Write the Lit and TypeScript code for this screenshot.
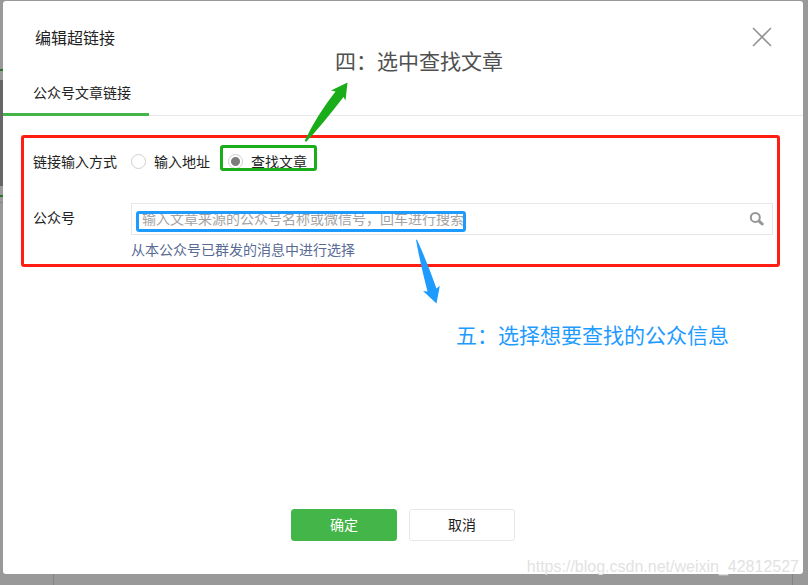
import { LitElement, html, css, svg } from "lit";
import { customElement, state } from "lit/decorators.js";

const closeIcon = svg`<svg width="20" height="20" viewBox="0 0 20 20" aria-hidden="true">
  <path d="M1 1 19 19M19 1 1 19" fill="none" stroke="#949494" stroke-width="1.6"/>
</svg>`;

const searchIcon = svg`<svg width="16" height="16" viewBox="0 0 16 16" aria-hidden="true">
  <circle cx="7.300" cy="6.400" r="4.500" fill="none" stroke="#969696" stroke-width="2"/>
  <path d="M11.300 10.300 14.200 13" stroke="#969696" stroke-width="3" stroke-linecap="round"/>
</svg>`;

@customElement("app-root")
export class AppRoot extends LitElement {
  @state() private mode = "search";

  static styles = css`
    :host {
      display: flex;
      flex-direction: column;
      box-sizing: border-box;
      position: relative;
      min-height: 100vh;
      padding: 1px 5px 11px 3px;
      overflow: hidden;
      color: #222;
      font: 14px/20px "Noto Sans CJK SC", sans-serif;
      background:
        linear-gradient(#858585, #858585) 53px 100% / 1px 11px no-repeat,
        linear-gradient(#858585, #858585) calc(100% - 15px) 100% / 1px 11px no-repeat,
        linear-gradient(#999 69px, #287328 69px 71px, #999 71px 80px, #666 80px 186px,
          #999 186px 195px, #287328 195px 197px, #999 197px 202px, #858585 202px 203px, #999 203px) 0 0 / 3px 100% no-repeat,
        #999;
    }
    .dialog {
      flex: 1;
      display: flex;
      flex-direction: column;
      background: #fff;
      border-radius: 3px;
    }
    .head {
      display: flex;
      align-items: center;
      justify-content: space-between;
      height: 72px;
      padding: 0 31px 0 32px;
    }
    h1 { margin: 0; font-size: 16px; font-weight: 400; line-height: 24px; }
    button { font: inherit; cursor: pointer; }
    .icon-button {
      display: flex;
      padding: 0;
      border: 0;
      background: none;
    }
    .tabs {
      display: flex;
      height: 42px;
      border-bottom: 1px solid #e7e7eb;
    }
    .tab {
      box-sizing: border-box;
      height: 43px;
      padding: 9px 18px 0 30px;
      border-bottom: 3px solid #44b549;
      color: inherit;
      text-decoration: none;
    }
    .form {
      display: flex;
      flex-direction: column;
      margin: 19px 23px 0 18px;
      padding: 13px 4px 5px 9px;
      border: 3px solid #ff1d14;
      border-radius: 3px;
    }
    .row { display: flex; }
    .row + .row { margin-top: 32px; }
    .label { flex: none; width: 98px; }
    .choices { display: flex; margin: 0; padding: 0; border: 0; }
    .choice { display: flex; align-items: center; gap: 8px; position: relative; }
    .choice + .choice { margin-left: 18px; }
    .choice input {
      appearance: none;
      box-sizing: border-box;
      width: 15px;
      height: 15px;
      margin: 0;
      border: 1px solid #d0d0d0;
      border-radius: 50%;
      background: #fff;
    }
    .choice input:checked {
      background: radial-gradient(circle, #7d7d7d 4px, #fff 5px);
    }
    .mark {
      position: absolute;
      border: 3px solid #1aad19;
      border-radius: 3px;
      pointer-events: none;
    }
    .mark-choice { inset: -6px -10px 0 -8px; }
    .mark-search { inset: 7px auto 2px 4px; width: 324px; border-color: #1d9bff; }
    .field { flex: 1; min-width: 0; }
    .label-search { padding-top: 4px; }
    .search {
      display: flex;
      align-items: center;
      position: relative;
      box-sizing: border-box;
      height: 32px;
      padding: 0 8px 0 10px;
      border: 1px solid #e7e7eb;
    }
    .search input {
      flex: 1;
      min-width: 0;
      padding: 0 0 2px;
      border: 0;
      outline: 0;
      color: #222;
      background: none;
      font: inherit;
    }
    .search input::placeholder { color: #a3a3a3; opacity: 1; }
    .help { display: block; width: max-content; margin-top: 4px; color: #576b95; text-decoration: none; }
    .foot {
      display: flex;
      justify-content: center;
      gap: 12px;
      margin-top: auto;
      padding: 24px 0 33px;
    }
    .action {
      width: 106px;
      height: 32px;
      padding: 0 0 2px;
      border: 1px solid #e7e7eb;
      border-radius: 3px;
      color: #222;
      background: #fff;
    }
    .primary { border-color: #44b549; background: #44b549; color: #fff; }
    .note {
      position: absolute;
      margin: 0;
      font-size: 21px;
      line-height: 30px;
      white-space: nowrap;
    }
    .note-four { left: 335px; top: 45px; color: #505050; }
    .note-five { left: 456px; top: 319px; color: #1d9bff; }
    .arrow { position: absolute; pointer-events: none; }
    .arrow-four { left: 304px; top: 82px; }
    .arrow-five { left: 414px; top: 239px; }
    .watermark {
      position: absolute;
      right: 9px;
      bottom: 8px;
      margin: 0;
      color: #e2e2e2;
      font: 16px/20px "Liberation Sans", sans-serif;
    }
  `;

  private choice(value: string, label: string, marked = false) {
    return html`<label class="choice">
      <input type="radio" name="mode" .value=${value} .checked=${this.mode === value}
        @change=${() => (this.mode = value)} />
      <span>${label}</span>
      ${marked ? html`<span class="mark mark-choice"></span>` : ""}
    </label>`;
  }

  render() {
    return html`
      <section class="dialog" role="dialog" aria-labelledby="title">
        <header class="head">
          <h1 id="title">编辑超链接</h1>
          <button class="icon-button" type="button" aria-label="关闭">${closeIcon}</button>
        </header>
        <nav class="tabs"><a class="tab" href="#article">公众号文章链接</a></nav>
        <div class="form">
          <div class="row">
            <span class="label" id="mode-label">链接输入方式</span>
            <fieldset class="choices" aria-labelledby="mode-label">
              ${this.choice("address", "输入地址")}
              ${this.choice("search", "查找文章", true)}
            </fieldset>
          </div>
          <div class="row">
            <label class="label label-search" for="account">公众号</label>
            <div class="field">
              <div class="search">
                <input id="account" type="text" placeholder="输入文章来源的公众号名称或微信号，回车进行搜索" />
                <button class="icon-button" type="button" aria-label="搜索">${searchIcon}</button>
                <span class="mark mark-search"></span>
              </div>
              <a class="help" href="#sent">从本公众号已群发的消息中进行选择</a>
            </div>
          </div>
        </div>
        <footer class="foot">
          <button class="action primary" type="button">确定</button>
          <button class="action" type="button">取消</button>
        </footer>
      </section>
      <p class="note note-four">四：选中查找文章</p>
      <svg class="arrow arrow-four" width="46" height="62" viewBox="0 0 46 62" aria-hidden="true">
        <path d="M43.500 .5 27 8.500 31.500 9.500 Q13 33 .8 58.500 L2 60 Q18 43 39.500 15 L41.500 18.500 Z" fill="#1aad19"/>
      </svg>
      <p class="note note-five">五：选择想要查找的公众信息</p>
      <svg class="arrow arrow-five" width="28" height="66" viewBox="0 0 28 66" aria-hidden="true">
        <path d="M2 .8 3 .8 Q14 25 22.500 49.500 L25.800 46.800 22.500 64.500 9 52 13.500 52.500 Q7 28 2 .8Z" fill="#1d9bff"/>
      </svg>
      <p class="watermark">https://blog.csdn.net/weixin_42812527</p>
    `;
  }
}
